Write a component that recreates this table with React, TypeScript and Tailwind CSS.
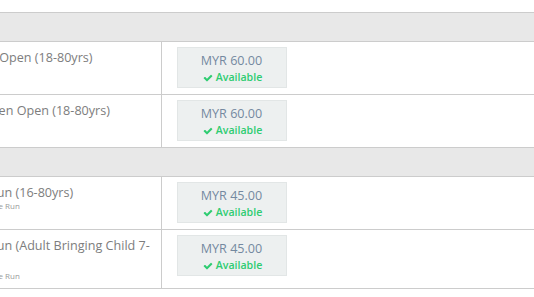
import React from "react";

function Check() {
  return (
    <svg viewBox="0 0 1792 1792" className="w-[10px] h-[10px] mr-[3px] fill-[#2ecc71]">
      <path d="M1671 566q0 40-28 68l-724 724-136 136q-28 28-68 28t-68-28l-136-136-362-362q-28-28-28-68t28-68l136-136q28-28 68-28t68 28l294 295 656-657q28-28 68-28t68 28l136 136q28 28 28 68z" />
    </svg>
  );
}

function Price({ amount }: { amount: string }) {
  return (
    <div className="w-[110px] h-[41px] bg-[#edf0f0] border border-[#e2e6e6] flex flex-col items-center pt-[4px]">
      <div className="text-[12.6px] leading-[18px] text-[#7489a0]">MYR {amount}</div>
      <div className="flex items-center text-[10.6px] leading-[15px] font-semibold text-[#2ecc71] pl-[2px]">
        <Check />
        Available
      </div>
    </div>
  );
}

function Header() {
  return (
    <tr>
      <td colSpan={2} className="h-[29px] bg-[#e8e8e8] border-y border-[#cccccc]"></td>
    </tr>
  );
}

function Row({ title, sub, amount }: { title: React.ReactNode; sub?: string; amount: string }) {
  return (
    <tr>
      <td className="w-[238px] border-b border-r border-[#cccccc] align-top pl-[8px] pt-[7px] pb-[7px] text-[#7d7d7d]">
        <div className="text-[12.6px] leading-[17px] whitespace-nowrap">{title}</div>
        {sub && <div className="text-[8px] leading-[10px] text-[#9a9a9a] whitespace-nowrap">{sub}</div>}
      </td>
      <td className="border-b border-[#cccccc] align-top pl-[15px] pt-[5px] pb-[6px]">
        <Price amount={amount} />
      </td>
    </tr>
  );
}

export default function App() {
  return (
    <div className="w-[534px] h-[297px] overflow-hidden bg-white" style={{ fontFamily: '"Open Sans", sans-serif' }}>
      <div className="pt-[12px] -ml-[77px]">
        <table className="border-collapse w-[700px]">
          <tbody>
            <Header />
            <Row title="5.5KM Elite Open (18-80yrs)" amount="60.00" />
            <Row title="10KM Women Open (18-80yrs)" amount="60.00" />
            <Header />
            <Row title="5 KM Fun Run (16-80yrs)" sub="**Non-Competitive Run" amount="45.00" />
            <Row
              title={<>5 KM Fun Run (Adult Bringing Child 7-<br />12yrs)</>}
              sub="**Non-Competitive Run"
              amount="45.00"
            />
          </tbody>
        </table>
      </div>
    </div>
  );
}
